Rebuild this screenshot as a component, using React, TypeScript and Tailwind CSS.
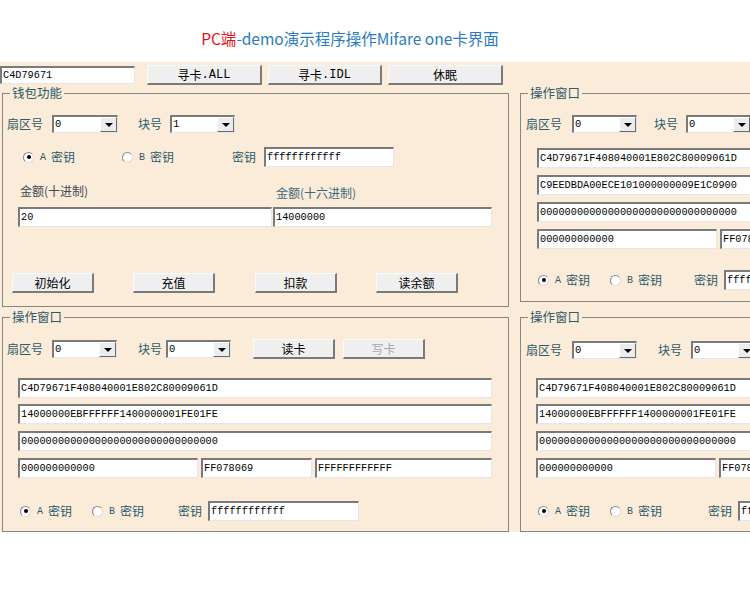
import React from "react"

const cjk = "font-['Noto_Sans_CJK_SC',sans-serif]"
const mono = "font-['Liberation_Mono','Noto_Sans_CJK_SC',monospace]"

function Field({ value, w, h = "h-[20px]", className = "" }: { value: string; w: string; h?: string; className?: string }) {
  return (
    <div
      className={`${w} ${h} ${className} shrink-0 bg-white flex items-center pl-[1px] overflow-hidden whitespace-nowrap border-t-2 border-l-2 border-t-[#7a7a7a] border-l-[#7a7a7a] border-b border-r border-b-[#e6e6e6] border-r-[#e6e6e6] ${mono} text-[10.25px] text-black`}
    >
      {value}
    </div>
  )
}

function Combo({ value, w, className = "" }: { value: string; w: string; className?: string }) {
  return (
    <div
      className={`${w} ${className} h-[18px] shrink-0 bg-white flex items-stretch border-t-2 border-l-2 border-t-[#7a7a7a] border-l-[#7a7a7a] border-b border-r border-b-[#e6e6e6] border-r-[#e6e6e6]`}
    >
      <span className={`flex-1 pl-[1px] leading-[15px] ${mono} text-[10.5px] text-black`}>{value}</span>
      <span className="w-[17px] bg-[#ececec] border border-t-white border-l-white border-b-[#6a6a6a] border-r-[#6a6a6a] flex items-center justify-center">
        <span className="w-0 h-0 border-l-[4px] border-r-[4px] border-t-[4px] border-l-transparent border-r-transparent border-t-black" />
      </span>
    </div>
  )
}

function Btn({ children, w = "w-[82px]", className = "", disabled = false }: { children: React.ReactNode; w?: string; className?: string; disabled?: boolean }) {
  return (
    <div
      className={`${w} ${className} h-[20px] shrink-0 flex items-center justify-center bg-[#efefef] border border-t-[#fafafa] border-l-[#fafafa] border-r-2 border-b-2 border-r-[#7a7a7a] border-b-[#7a7a7a] ${cjk} text-[12px] leading-[16px] ${disabled ? "text-[#a8a8a8]" : "text-black"}`}
    >
      {children}
    </div>
  )
}

function Label({ children, className = "" }: { children: React.ReactNode; className?: string }) {
  return <span className={`${cjk} text-[12px] leading-[16px] text-[#2d5a6b] shrink-0 ${className}`}>{children}</span>
}

function Radio({ letter, checked, w }: { letter: string; checked?: boolean; w: string }) {
  return (
    <div className={`${w} shrink-0 flex items-center`}>
      <span className="w-[11px] h-[11px] rounded-full bg-white border border-t-[#8a8a8a] border-l-[#8a8a8a] border-b-[#dcdcdc] border-r-[#dcdcdc] flex items-center justify-center">
        {checked && <span className="w-[4px] h-[4px] rounded-full bg-black" />}
      </span>
      <span className={`ml-[6px] ${mono} text-[10px] text-[#2d5a6b]`}>{letter}</span>
      <Label className="ml-[5px]">密钥</Label>
    </div>
  )
}

function Group({ title, className, children }: { title: string; className: string; children: React.ReactNode }) {
  return (
    <div className={`relative shrink-0 border border-[#858585] ${className}`}>
      <span className={`absolute -top-[9px] left-[7px] px-[2px] bg-[#faecd9] ${cjk} text-[12.5px] leading-[16px] text-[#2d5a6b]`}>
        {title}
      </span>
      {children}
    </div>
  )
}

function DataRows({ rows, tail }: { rows: string[]; tail: [string, string, string] }) {
  return (
    <>
      <Field value={rows[0]} w="w-[474px]" className="mt-[19px] ml-[15px]" />
      <Field value={rows[1]} w="w-[474px]" className="mt-[6px] ml-[15px]" />
      <Field value={rows[2]} w="w-[474px]" className="mt-[7px] ml-[15px]" />
      <div className="mt-[7px] ml-[15px] flex">
        <Field value={tail[0]} w="w-[180px]" />
        <Field value={tail[1]} w="w-[111px]" className="ml-[3px]" />
        <Field value={tail[2]} w="w-[177px]" className="ml-[3px]" />
      </div>
    </>
  )
}

const zeros = "00000000000000000000000000000000"

export default function App() {
  return (
    <div className="w-[750px] h-[608px] overflow-hidden bg-white">
      {/* title */}
      <div className="h-[62px] flex justify-center items-end pb-[14px] pr-[50px]">
        <h1 className={`${cjk} text-[15.5px] leading-[20px] text-[#2a7bc0]`}>
          <span className="text-[#e2141a]">PC端</span>-demo演示程序操作Mifare one卡界面
        </h1>
      </div>

      <div className="h-[470px] bg-[#faecd9] flex">
        {/* left column */}
        <div className="w-[510px] shrink-0 pt-[3px]">
          <div className="h-[20px] flex items-center">
            <Field value="C4D79671" w="w-[135px]" h="h-[18px]" />
            <Btn w="w-[115px]" className="ml-[12px]">
              寻卡<span className={mono}>.ALL</span>
            </Btn>
            <Btn w="w-[114px]" className="ml-[6px]">
              寻卡<span className={mono}>.IDL</span>
            </Btn>
            <Btn w="w-[115px]" className="ml-[6px]">休眠</Btn>
          </div>

          {/* 钱包功能 */}
          <Group title="钱包功能" className="mt-[8px] ml-[2px] w-[507px] h-[214px]">
            <div className="mt-[21px] h-[18px] flex items-center">
              <Label className="ml-[4px] w-[36px]">扇区号</Label>
              <Combo value="0" w="w-[66px]" className="ml-[9px]" />
              <Label className="ml-[20px] w-[24px]">块号</Label>
              <Combo value="1" w="w-[65px]" className="ml-[8px]" />
            </div>
            <div className="mt-[14px] h-[20px] flex items-center pl-[20px]">
              <Radio letter="A" checked w="w-[99px]" />
              <Radio letter="B" w="w-[110px]" />
              <Label className="w-[24px]">密钥</Label>
              <Field value="ffffffffffff" w="w-[130px]" className="ml-[8px]" />
            </div>
            <div className="mt-[17px] h-[14px] flex items-center">
              <span className={`ml-[17px] w-[256px] ${cjk} text-[12px] leading-[14px] text-[#404a50]`}>金额(十进制)</span>
              <span className={`${cjk} text-[12px] leading-[14px] mt-[3px] text-[#3a6a80]`}>金额(十六进制)</span>
            </div>
            <div className="mt-[9px] flex">
              <Field value="20" w="w-[254px]" className="ml-[15px]" />
              <Field value="14000000" w="w-[219px]" className="ml-[1px]" />
            </div>
            <div className="mt-[46px] flex">
              <Btn className="ml-[9px]">初始化</Btn>
              <Btn className="ml-[39px]">充值</Btn>
              <Btn className="ml-[40px]">扣款</Btn>
              <Btn className="ml-[39px]">读余额</Btn>
            </div>
          </Group>

          {/* 操作窗口 */}
          <Group title="操作窗口" className="mt-[10px] ml-[2px] w-[507px] h-[215px]">
            <div className="mt-[21px] h-[20px] flex items-center">
              <Label className="ml-[4px] w-[36px]">扇区号</Label>
              <Combo value="0" w="w-[65px]" className="ml-[9px]" />
              <Label className="ml-[21px] w-[24px]">块号</Label>
              <Combo value="0" w="w-[65px]" className="ml-[4px]" />
              <Btn className="ml-[22px]">读卡</Btn>
              <Btn className="ml-[8px]" disabled>写卡</Btn>
            </div>
            <DataRows
              rows={["C4D79671F408040001E802C80009061D", "14000000EBFFFFFF1400000001FE01FE", zeros]}
              tail={["000000000000", "FF078069", "FFFFFFFFFFFF"]}
            />
            <div className="mt-[23px] h-[20px] flex items-center pl-[17px]">
              <Radio letter="A" checked w="w-[72px]" />
              <Radio letter="B" w="w-[86px]" />
              <Label className="w-[24px]">密钥</Label>
              <Field value="ffffffffffff" w="w-[151px]" className="ml-[6px]" />
            </div>
          </Group>
        </div>

        {/* right column */}
        <div className="ml-[10px] w-[480px] shrink-0 pt-[31px]">
          <Group title="操作窗口" className="w-[480px] h-[209px]">
            <div className="mt-[21px] h-[18px] flex items-center">
              <Label className="ml-[5px] w-[36px]">扇区号</Label>
              <Combo value="0" w="w-[65px]" className="ml-[10px]" />
              <Label className="ml-[17px] w-[24px]">块号</Label>
              <Combo value="0" w="w-[65px]" className="ml-[8px]" />
            </div>
            <Field value="C4D79671F408040001E802C80009061D" w="w-[474px]" className="mt-[15px] ml-[16px]" />
            <Field value="C9EEDBDA00ECE101000000009E1C0900" w="w-[474px]" className="mt-[7px] ml-[16px]" />
            <Field value={zeros} w="w-[474px]" className="mt-[7px] ml-[16px]" />
            <div className="mt-[7px] ml-[16px] flex">
              <Field value="000000000000" w="w-[180px]" />
              <Field value="FF078069" w="w-[111px]" className="ml-[3px]" />
              <Field value="FFFFFFFFFFFF" w="w-[177px]" className="ml-[3px]" />
            </div>
            <div className="mt-[21px] h-[20px] flex items-center pl-[17px]">
              <Radio letter="A" checked w="w-[72px]" />
              <Radio letter="B" w="w-[84px]" />
              <Label className="w-[24px]">密钥</Label>
              <Field value="ffffffffffff" w="w-[151px]" className="ml-[6px]" />
            </div>
          </Group>

          <Group title="操作窗口" className="mt-[15px] w-[480px] h-[215px]">
            <div className="mt-[23px] h-[18px] flex items-center">
              <Label className="ml-[5px] w-[36px]">扇区号</Label>
              <Combo value="0" w="w-[65px]" className="ml-[10px]" />
              <Label className="ml-[21px] w-[24px]">块号</Label>
              <Combo value="0" w="w-[65px]" className="ml-[9px]" />
            </div>
            <DataRows
              rows={["C4D79671F408040001E802C80009061D", "14000000EBFFFFFF1400000001FE01FE", zeros]}
              tail={["000000000000", "FF078069", "FFFFFFFFFFFF"]}
            />
            <div className="mt-[23px] h-[20px] flex items-center pl-[17px]">
              <Radio letter="A" checked w="w-[72px]" />
              <Radio letter="B" w="w-[98px]" />
              <Label className="w-[24px]">密钥</Label>
              <Field value="ffffffffffff" w="w-[151px]" className="ml-[6px]" />
            </div>
          </Group>
        </div>
      </div>
    </div>
  )
}
